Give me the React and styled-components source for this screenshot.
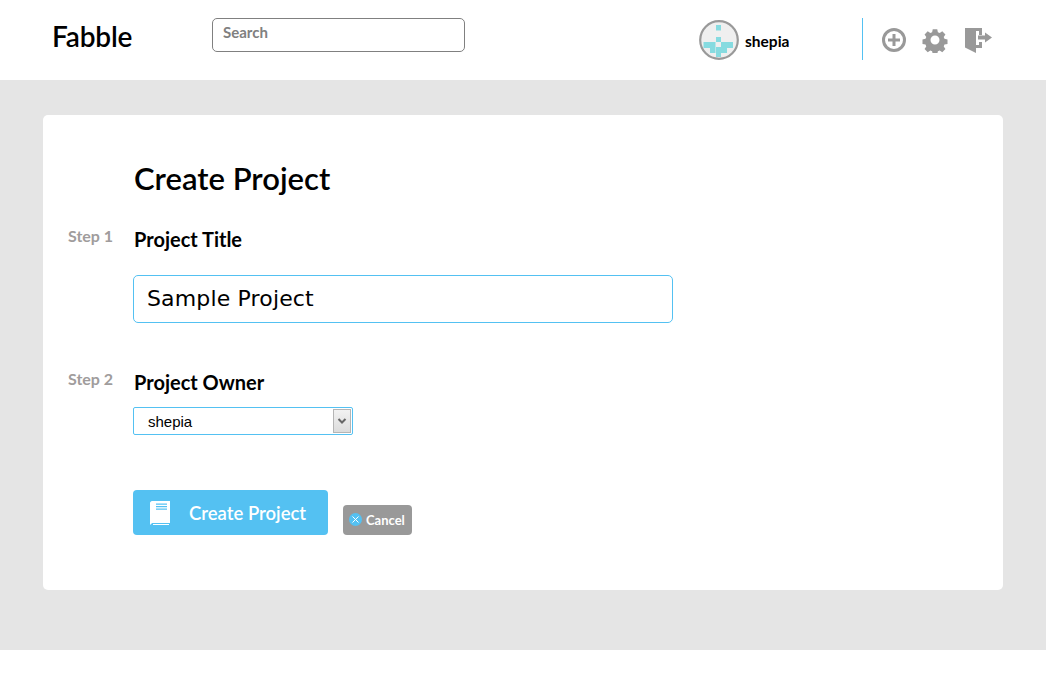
import React from "react";
import styled, { createGlobalStyle } from "styled-components";

const GlobalStyle = createGlobalStyle`
    html, body {
        margin: 0;
        padding: 0;
        background: #fff;
        font-family: "Lato", "Open Sans", sans-serif;
    }
`;

const Header = styled.header`
    height: 80px;
    display: flex;
    align-items: center;
    background: #fff;
`;

const Logo = styled.div`
    width: 160px;
    margin-left: 52px;
    margin-top: -8px;
    font-size: 28px;
    font-weight: 600;
    letter-spacing: -0.15px;
    color: #000;
`;

const SearchInput = styled.input`
    box-sizing: border-box;
    width: 253px;
    height: 34px;
    margin-top: -10px;
    padding: 0 10px 7px;
    border: 1px solid #808080;
    border-radius: 5px;
    font-family: "Lato", sans-serif;
    font-size: 15px;
    font-weight: 700;
    outline: none;

    &::placeholder {
        color: #808080;
        opacity: 1;
    }
`;

const UserArea = styled.div`
    display: flex;
    align-items: center;
    gap: 6px;
    width: 163px;
    margin-left: 234px;
`;

const Avatar = styled.svg`
    width: 40px;
    height: 40px;
`;

const UserName = styled.span`
    margin-top: 2px;
    font-size: 15.5px;
    font-weight: 700;
    color: #000;
`;

const Actions = styled.div`
    box-sizing: border-box;
    display: flex;
    align-items: center;
    gap: 15px;
    height: 42px;
    margin-top: -3px;
    padding-left: 18px;
    padding-top: 2px;
    border-left: 1px solid #54c1f2;
`;

const ActionIcon = styled.svg`
    display: block;
    width: ${(p) => p.$width || 26}px;
    height: 26px;
    fill: #999;
`;

const Main = styled.main`
    height: 570px;
    padding-top: 35px;
    box-sizing: border-box;
    background: #e5e5e5;
`;

const Card = styled.section`
    box-sizing: border-box;
    width: 960px;
    height: 475px;
    margin-left: 43px;
    padding: 43px 0 0 90px;
    background: #fff;
    border-radius: 5px;
`;

const Title = styled.h1`
    margin: 0 0 27px 1px;
    font-size: 31px;
    line-height: 40px;
    font-weight: 600;
    color: #000;
`;

const Step = styled.div`
    position: relative;
    margin-bottom: ${(p) => p.$gap}px;
`;

const StepLabel = styled.span`
    position: absolute;
    left: -65px;
    top: 1px;
    font-size: 16px;
    font-weight: 700;
    color: #a09c9c;
`;

const FieldLabel = styled.h2`
    margin: 0 0 0 1px;
    font-size: 20px;
    line-height: 28px;
    font-weight: 700;
    color: #000;
`;

const TitleInput = styled.input`
    display: block;
    box-sizing: border-box;
    width: 540px;
    height: 48px;
    margin-top: 22px;
    padding: 0 13px 2px;
    border: 1px solid #54c1f2;
    border-radius: 5px;
    font-family: "DejaVu Sans", sans-serif;
    font-size: 22px;
    letter-spacing: 0.15px;
    color: #000;
    outline: none;
`;

const SelectBox = styled.div`
    box-sizing: border-box;
    display: flex;
    align-items: center;
    justify-content: space-between;
    width: 220px;
    height: 28px;
    margin-top: 11px;
    padding-left: 14px;
    border: 1px solid #54c1f2;
    border-radius: 2px;
    font-family: "Liberation Sans", sans-serif;
    font-size: 15px;
    color: #000;
`;

const SelectArrow = styled.span`
    box-sizing: border-box;
    display: flex;
    align-items: center;
    justify-content: center;
    width: 18px;
    height: 24px;
    margin-right: 1px;
    background: linear-gradient(#f2f2f2, #dcdcdc);
    border: 1px solid #b5b5b5;
`;

const ButtonRow = styled.div`
    display: flex;
    align-items: flex-end;
    gap: 15px;
`;

const CreateButton = styled.button`
    display: flex;
    align-items: center;
    gap: 18px;
    width: 195px;
    height: 45px;
    padding: 0 0 0 16px;
    border: none;
    border-radius: 4px;
    background: #54c1f2;
    color: #fff;
    font-family: "Lato", sans-serif;
    font-size: 18.500px;
    font-weight: 600;
`;

const CancelButton = styled.button`
    display: flex;
    align-items: center;
    gap: 4px;
    width: 69px;
    height: 30px;
    padding: 0 0 1px 6px;
    border: none;
    border-radius: 4px;
    background: #999;
    color: #fff;
    font-family: "Lato", sans-serif;
    font-size: 13px;
    font-weight: 700;
`;

const CancelDot = styled.span`
    display: flex;
    align-items: center;
    justify-content: center;
    width: 13px;
    height: 13px;
    border-radius: 50%;
    background: #54c1f2;
`;

const Footer = styled.div`
    height: 36px;
    background: #fff;
`;

const App = () => (
    <>
        <GlobalStyle />
        <Header>
            <Logo>Fabble</Logo>
            <SearchInput placeholder="Search" />
            <UserArea>
                <Avatar viewBox="0 0 40 40">
                    <circle cx="20" cy="20" r="18.8" fill="#efefef" stroke="#999" strokeWidth="2.2" />
                    <path
                        fill="#86dbe0"
                        d="M17 5h5v5.500h-5zM17 17h5v5h-5zM4.500 22H16.500V33H11V28H4.500zM22 22H34V28H28V33H22zM17 27h5v10h-5z"
                    />
                </Avatar>
                <UserName>shepia</UserName>
            </UserArea>
            <Actions>
                <ActionIcon viewBox="0 0 26 26">
                    <path
                        fillRule="evenodd"
                        d="M13 1a12 12 0 1 1 0 24a12 12 0 0 1 0-24zM13 4a9 9 0 1 0 0 18a9 9 0 0 0 0-18zM11.500 7h3v4.500h4.500v3h-4.500v4.500h-3v-4.500h-4.500v-3h4.500z"
                    />
                </ActionIcon>
                <ActionIcon viewBox="0 0 26 26">
                    <path
                        fillRule="evenodd"
                        d="M10.500 1h5l.7 3.400 2 .8 2.900-1.900 3.500 3.500-1.900 2.900.8 2 3.400.7v5l-3.400.7-.8 2 1.900 2.900-3.500 3.500-2.900-1.900-2 .8-.7 3.400h-5l-.7-3.400-2-.8-2.900 1.900-3.500-3.500 1.900-2.900-.8-2-3.400-.7v-5l3.400-.7.8-2-1.900-2.900 3.500-3.500 2.900 1.900 2-.8zM13 8a5 5 0 1 0 0 10a5 5 0 0 0 0-10z"
                        transform="translate(1.300 1.300) scale(.9)"
                    />
                </ActionIcon>
                <ActionIcon $width={29} viewBox="0 0 29 26">
                    <path d="M2 1H19V8H16V4H13V26L2 20.500zM13 18H16V15H19V21H13zM15 8.500h7V5.500l7 5-7 5v-3h-7z" />
                </ActionIcon>
            </Actions>
        </Header>
        <Main>
            <Card>
                <Title>Create Project</Title>
                <Step $gap={45}>
                    <StepLabel>Step 1</StepLabel>
                    <FieldLabel>Project Title</FieldLabel>
                    <TitleInput defaultValue="Sample Project" />
                </Step>
                <Step $gap={55}>
                    <StepLabel>Step 2</StepLabel>
                    <FieldLabel>Project Owner</FieldLabel>
                    <SelectBox>
                        shepia
                        <SelectArrow>
                            <svg width="10" height="8" viewBox="0 0 10 8">
                                <path d="M1.500 2l3.500 3.500 3.500-3.500" fill="none" stroke="#666" strokeWidth="2" />
                            </svg>
                        </SelectArrow>
                    </SelectBox>
                </Step>
                <ButtonRow>
                    <CreateButton>
                        <svg width="22" height="25" viewBox="0 0 22 25">
                            <path
                                fill="#fff"
                                fillRule="evenodd"
                                d="M3 1H21V23H4C3 23 2 23.500 2 24.500H1V3C1 2 2 1 3 1zM7 3.500V4.700H18V3.500zM7 6V7.200H18V6zM7 8.500V9.700H18V8.500zM4 24H20V25H4z"
                            />
                        </svg>
                        Create Project
                    </CreateButton>
                    <CancelButton>
                        <CancelDot>
                            <svg width="7" height="7" viewBox="0 0 7 7">
                                <path d="M.5.500l6 6M6.500.500l-6 6" stroke="#fff" strokeWidth="1" />
                            </svg>
                        </CancelDot>
                        Cancel
                    </CancelButton>
                </ButtonRow>
            </Card>
        </Main>
        <Footer />
    </>
);

export default App;
